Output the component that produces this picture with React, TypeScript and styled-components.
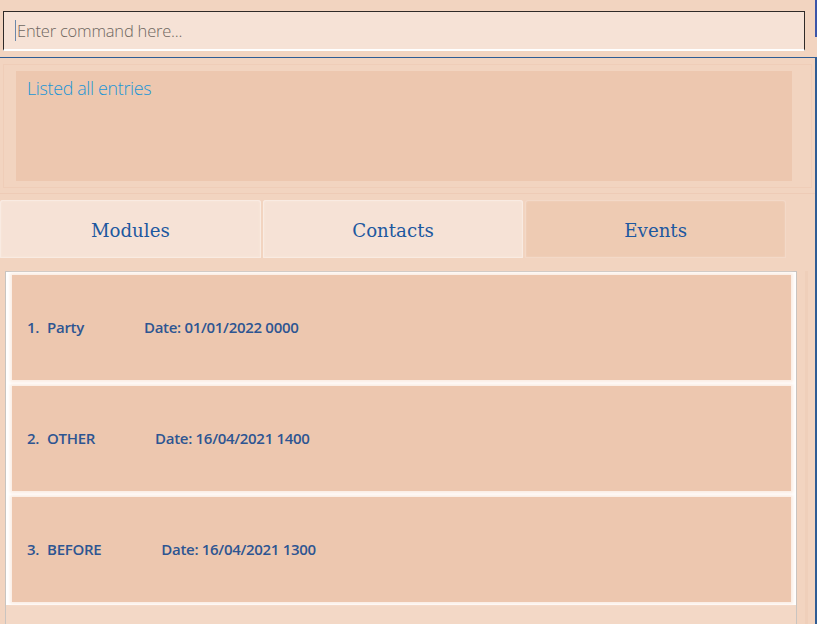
import React from "react";
import styled, { createGlobalStyle } from "styled-components";

const Global = createGlobalStyle`
  html, body { margin: 0; padding: 0; }
  body { background: #f2d4c0; width: 817px; height: 624px; overflow: hidden; }
  #root { width: 817px; height: 624px; }
`;

const Page = styled.div`
  display: flex;
  flex-direction: column;
  width: 817px;
  height: 624px;
  background: #f2d4c0;
  font-family: "Open Sans", "Noto Sans", sans-serif;
`;

const CommandRow = styled.div`
  display: flex;
  align-items: flex-start;
  height: 57px;
`;

const CommandBox = styled.div`
  margin: 11px 0 0 3px;
  width: 789px;
  height: 37px;
  background: #f6e2d6;
  border: 1px solid #2f2a28;
  border-bottom: 2px solid #ffffff;
  display: flex;
  align-items: center;
  padding-left: 11px;
  box-sizing: content-box;
`;

const Caret = styled.span`
  width: 1px;
  height: 21px;
  background: #6c87a8;
  margin-right: 1px;
`;

const Placeholder = styled.span`
  font-family: "Open Sans", sans-serif;
  font-weight: 300;
  font-size: 16.5px;
  color: #6e6660;
  letter-spacing: -0.2px;
`;

const EdgeStripe = styled.div`
  margin-left: auto;
  width: 2px;
  height: 37px;
  background: #3b55a8;
`;

const Main = styled.div`
  flex: 1;
  display: flex;
  flex-direction: column;
  border-top: 1px solid #2f5c94;
  border-right: 2px solid #2f5c94;
  min-height: 0;
`;

const ResultFrame = styled.div`
  margin: 6px 3px 0 3px;
  border: 1px solid #efcdb8;
  padding: 6px 19px 6px 12px;
  height: 110px;
  box-sizing: content-box;
`;

const ResultBox = styled.div`
  height: 100%;
  background: #edc7af;
  padding: 5px 11px;
  box-sizing: border-box;
  font-family: "Open Sans", sans-serif;
  font-weight: 300;
  font-size: 17.8px;
  color: #1b95d6;
  letter-spacing: -0.3px;
`;

const Divider = styled.div`
  margin-top: 5px;
  height: 1px;
  background: #eecbb6;
`;

const TabRow = styled.div`
  display: flex;
  gap: 2px;
  margin-top: 6px;
  height: 58px;
  width: 786px;
`;

const Tab = styled.div<{ $active?: boolean }>`
  flex: 1;
  display: flex;
  align-items: center;
  justify-content: center;
  padding-top: 2px;
  background: ${(p) => (p.$active ? "#eecbb3" : "#f6e2d6")};
  border-radius: 3px 3px 0 0;
  box-shadow: inset 0 0 0 1px ${(p) => (p.$active ? "#f3d9c8" : "#f9ebe2")},
    inset 0 0 3px ${(p) => (p.$active ? "#f6e0d2" : "#faede5")};
  font-family: "DejaVu Serif", serif;
  font-size: 18.2px;
  color: #1d58a0;
`;

const ListArea = styled.div`
  display: flex;
  flex: 1;
  margin-top: 13px;
  min-height: 0;
`;

const ListPanel = styled.div`
  margin-left: 5px;
  width: 790px;
  border: 1px solid #c9c4c0;
  border-bottom: none;
  background: #f3d8c6;
  display: flex;
  flex-direction: column;
`;

const Row = styled.div`
  background: #ffffff;
  padding: 3px 5px 3px 6px;
`;

const Card = styled.div`
  height: 105px;
  background: #edc7af;
  box-shadow: 0 0 3px 2px #fbece3;
  display: flex;
  align-items: center;
  padding-left: 15px;
  padding-bottom: 2px;
  box-sizing: border-box;
  font-family: "Open Sans", sans-serif;
  font-weight: 600;
  font-size: 15px;
  color: #2d5592;
  letter-spacing: -0.3px;
`;

const Name = styled.span`
  margin-right: 60px;
`;

const Index = styled.span`
  margin-right: 8px;
`;

const Gutter = styled.div`
  flex: 1;
  display: flex;
  justify-content: center;
`;

const GutterLine = styled.div`
  width: 3px;
  background: #efcfba;
`;

const events = [
  { name: "Party", date: "01/01/2022 0000" },
  { name: "OTHER", date: "16/04/2021 1400" },
  { name: "BEFORE", date: "16/04/2021 1300" },
];

export default function App() {
  return (
    <Page>
      <Global />
      <CommandRow>
        <CommandBox>
          <Caret />
          <Placeholder>Enter command here...</Placeholder>
        </CommandBox>
        <EdgeStripe />
      </CommandRow>
      <Main>
        <ResultFrame>
          <ResultBox>Listed all entries</ResultBox>
        </ResultFrame>
        <Divider />
        <TabRow>
          <Tab>Modules</Tab>
          <Tab>Contacts</Tab>
          <Tab $active>Events</Tab>
        </TabRow>
        <ListArea>
          <ListPanel>
            {events.map((e, i) => (
              <Row key={i}>
                <Card>
                  <Index>{i + 1}.</Index>
                  <Name>{e.name}</Name>
                  <span>Date: {e.date}</span>
                </Card>
              </Row>
            ))}
          </ListPanel>
          <Gutter>
            <GutterLine />
          </Gutter>
        </ListArea>
      </Main>
    </Page>
  );
}
